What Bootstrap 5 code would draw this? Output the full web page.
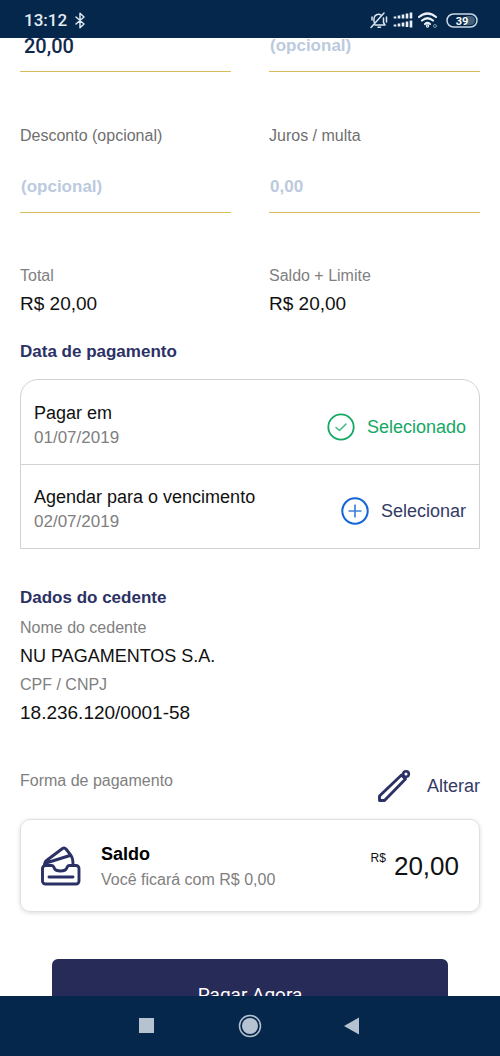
<!DOCTYPE html>
<html lang="pt-BR">
<head>
<meta charset="utf-8">
<meta name="viewport" content="width=device-width, initial-scale=1">
<title>Pagamento</title>
<link href="https://cdn.jsdelivr.net/npm/bootstrap@5.3.0/dist/css/bootstrap.min.css" rel="stylesheet">
<style>
  body { font-family: "Liberation Sans", Arial, sans-serif; color: #111; background: #fff; }
  .status-bar { height: 38px; background: #04274b; color: #e4ecf5; padding: 2px 22px 0 24px; font-family: Roboto, sans-serif; }
  .clock { font-size: 17px; line-height: 24px; font-weight: 500; }
  .page { padding: 32px 20px 0; }
  .pair { display: grid; grid-template-columns: 1fr 1fr; column-gap: 38px; }
  .pair.fees { margin-top: 52px; }
  .pair.totals { margin-top: 51px; }
  .caption, .form-caption { font-size: 16px; line-height: 24px; color: #808080; }
  .caption.date { font-size: 17px; }
  .form-caption { color: #6f6f6f; margin-bottom: 25px; }
  .value { font-size: 19px; line-height: 28px; margin-top: 2px; }
  .value.payee-name { font-size: 18px; }
  .field.form-control { height: 40px; border: 0; border-bottom: 1px solid #d9bd5c; border-radius: 0; padding: 0 1px 11px; font-size: 17px; line-height: 28px; font-weight: 700; color: #10284f; background: transparent; transition: none; }
  .field.filled.form-control { padding-left: 4px; font-size: 20px; font-weight: 500; font-family: Roboto, sans-serif; }
  .field.form-control::placeholder { color: #bccade; opacity: 1; }
  .section-title { font-size: 17px; line-height: 28px; font-weight: 700; color: #2b3164; margin: 20px 0 0; }
  .section-title.payee { margin-top: 35px; }
  .caption.document { margin-top: 3px; }
  .options { border: 1px solid #d2d2d2; border-radius: 18px 18px 0 0; margin-top: 13px; }
  .option { padding: 19px 13px 14px; min-height: 84px; }
  .option + .option { border-top: 1px solid #d2d2d2; }
  .option-title { font-size: 18px; line-height: 26px; }
  .action { border: 0; padding: 0; background: none; font-size: 18px; line-height: 28px; color: #343a66; text-decoration: none; gap: 12px; }
  .option .action { margin-top: 4px; }
  .action.chosen { color: #14a863; }
  .method { margin-top: 42px; }
  .method .action { gap: 16px; }
  .balance { border: 1px solid #e0e0e0; border-radius: 10px; box-shadow: 0 1px 4px #00000026; margin-top: 16px; padding: 18px 20px; min-height: 93px; }
  .balance-text { margin-left: 20px; }
  .balance-name { font-size: 18px; line-height: 28px; font-weight: 700; color: #000; }
  .currency { font-size: 12px; line-height: 16px; }
  .amount { font-size: 26px; line-height: 32px; }
  .pay { margin: 47px 32px 0; height: 72px; border: 0; border-radius: 6px; background: #262b57; color: #fff; font-size: 19px; font-family: Roboto, sans-serif; }
  .system-nav { height: 60px; background: #04274b; gap: 78px; }
  .system-nav button { border: 0; padding: 0; background: none; line-height: 0; }
</style>
</head>
<body class="vh-100 overflow-hidden">
<header class="status-bar fixed-top d-flex align-items-center justify-content-between">
  <div class="d-flex align-items-center gap-2">
    <span class="clock">13:12</span>
    <svg width="11" height="17" viewBox="0 0 11 17" fill="none" stroke="#dbe6f1" stroke-width="1.5" stroke-linejoin="round" stroke-linecap="round"><path d="M1 5l8 7-4 3.800V1.200L9 5l-8 7"/></svg>
  </div>
  <div class="d-flex align-items-center">
    <svg width="18" height="17" viewBox="0 0 18 17" fill="none" stroke="#dbe6f1" stroke-width="1.500" stroke-linecap="round" stroke-linejoin="round"><path d="M1 15.500L14 1M4 10V6.500a4.500 4.500 0 0 1 7-3.500M13.500 6v4.500l1.500 2.500H5M8 15.300h2.500M16.500 5v5M2 5v3"/></svg>
    <svg class="ms-1" width="22" height="17" viewBox="0 0 22 17" stroke="#e8eff6" stroke-width="2.600"><path d="M3 4.500v2M7 3.500v3M11 2.500v4M15 1.500v5M19 .5v6M3 12.500v2M7 11.500v3M11 10.500v4M15 9.500v5.500M19 8.500v7"/></svg>
    <svg class="ms-1" width="20" height="17" viewBox="0 0 20 17" fill="none" stroke="#e8eff6" stroke-width="2.200" stroke-linecap="round"><path d="M1 5q8.500-7 17 0M4 8.500q5.500-4.500 11 0M7 12q2.500-2 5 0"/><circle cx="9.500" cy="14" r=".6"/><circle cx="17" cy="14" r="1.500" stroke="#7f95ae" stroke-width="1"/></svg>
    <svg class="ms-2" width="32" height="15" viewBox="0 0 32 15"><rect x="1" y="1" width="30" height="13" rx="6.500" fill="#04274b" stroke="#c9d8e6" stroke-width="1.500"/><path d="M20 3h4.500a4.500 4.500 0 0 1 0 9H20z" fill="#436079"/><text x="16" y="11.500" text-anchor="middle" font-size="11" font-weight="700" fill="#fff">39</text></svg>
  </div>
</header>

<main class="page h-100 overflow-hidden">
  <form>
    <div class="pair">
      <input class="field filled form-control" type="text" value="20,00" aria-label="Valor">
      <input class="field form-control" type="text" placeholder="(opcional)" aria-label="Abatimento">
    </div>
    <div class="pair fees">
      <div><label class="form-caption d-block" for="desconto">Desconto (opcional)</label><input id="desconto" class="field form-control" type="text" placeholder="(opcional)"></div>
      <div><label class="form-caption d-block" for="juros">Juros / multa</label><input id="juros" class="field form-control" type="text" placeholder="0,00"></div>
    </div>
    <div class="pair totals">
      <div><div class="caption">Total</div><div class="value">R$ 20,00</div></div>
      <div><div class="caption">Saldo + Limite</div><div class="value">R$ 20,00</div></div>
    </div>

    <h2 class="section-title">Data de pagamento</h2>
    <div class="options">
      <div class="option d-flex justify-content-between align-items-center">
        <div><div class="option-title">Pagar em</div><div class="caption date">01/07/2019</div></div>
        <button type="button" class="action chosen d-flex align-items-center">
          <svg width="28" height="28" viewBox="0 0 28 28" fill="none" stroke="#14a863" stroke-linecap="round" stroke-linejoin="round"><circle cx="14" cy="14" r="12.700" stroke-width="1.800"/><path d="M9 14.500l3.500 3 6.500-6.500" stroke-width="1.500" stroke="#3fb884"/></svg>
          Selecionado</button>
      </div>
      <div class="option d-flex justify-content-between align-items-center">
        <div><div class="option-title">Agendar para o vencimento</div><div class="caption date">02/07/2019</div></div>
        <button type="button" class="action d-flex align-items-center">
          <svg width="28" height="28" viewBox="0 0 28 28" fill="none" stroke="#1565d8"><circle cx="14" cy="14" r="12.700" stroke-width="2"/><path d="M14 7.500v13M7.500 14h13" stroke-width="1.700" stroke="#3f83dc"/></svg>
          Selecionar</button>
      </div>
    </div>

    <h2 class="section-title payee">Dados do cedente</h2>
    <div class="caption mt-1">Nome do cedente</div>
    <div class="value payee-name">NU PAGAMENTOS S.A.</div>
    <div class="caption document">CPF / CNPJ</div>
    <div class="value">18.236.120/0001-58</div>

    <div class="method d-flex justify-content-between align-items-start">
      <span class="caption">Forma de pagamento</span>
      <a href="#" class="action d-flex align-items-center">
        <svg width="34" height="34" viewBox="0 0 34 34" fill="none" stroke="#2b3164" stroke-width="2.900" stroke-linejoin="round"><path d="M2.500 31.500v-4.500L24.500 6l4 4L7.500 31.500z"/><path d="M24.500 6l4 4" stroke-width="2.200"/><circle cx="29" cy="5" r="2.800" stroke-width="2.600"/></svg>
        Alterar</a>
    </div>

    <div class="balance d-flex align-items-center">
      <svg width="40" height="40" viewBox="0 0 40 40" fill="none" stroke="#2b3164" stroke-width="2.900" stroke-linecap="round" stroke-linejoin="round"><path d="M4.500 19.500H11c1.500 0 1.500 1 2.500 3s3 2.500 6 2.500 5-.500 6-2.500 1-3 2.500-3H35a3 3 0 0 1 3 3V35a3 3 0 0 1-3 3H4.500a3 3 0 0 1-3-3V22.500a3 3 0 0 1 3-3zM8 31h24M3.500 19v-1q0-2 2-3.500L21.500 2.500q2-1.200 3.500.5l5 6.500q2 3 2 9M5 17L29 9.500"/></svg>
      <div class="balance-text flex-fill"><div class="balance-name">Saldo</div><div class="caption">Você ficará com R$ 0,00</div></div>
      <div class="d-flex align-items-start gap-2"><span class="currency">R$</span><span class="amount">20,00</span></div>
    </div>
    <div class="d-grid"><button type="submit" class="pay">Pagar Agora</button></div>
  </form>
</main>

<nav class="system-nav fixed-bottom d-flex justify-content-center align-items-center" aria-label="Sistema">
  <button type="button" aria-label="Recentes"><svg width="24" height="24" viewBox="0 0 24 24"><rect x="3" y="4" width="15" height="15" fill="#b6c2cf"/></svg></button>
  <button type="button" aria-label="Início"><svg width="24" height="24" viewBox="0 0 24 24"><circle cx="12" cy="12" r="10.500" fill="none" stroke="#b6c2cf" stroke-width="1.500"/><circle cx="12" cy="12" r="8" fill="#b6c2cf"/></svg></button>
  <button type="button" aria-label="Voltar"><svg width="24" height="24" viewBox="0 0 24 24"><path d="M4 12l15-8.500v17z" fill="#b6c2cf"/></svg></button>
</nav>
<script src="https://cdn.jsdelivr.net/npm/bootstrap@5.3.0/dist/js/bootstrap.bundle.min.js"></script>
</body>
</html>
